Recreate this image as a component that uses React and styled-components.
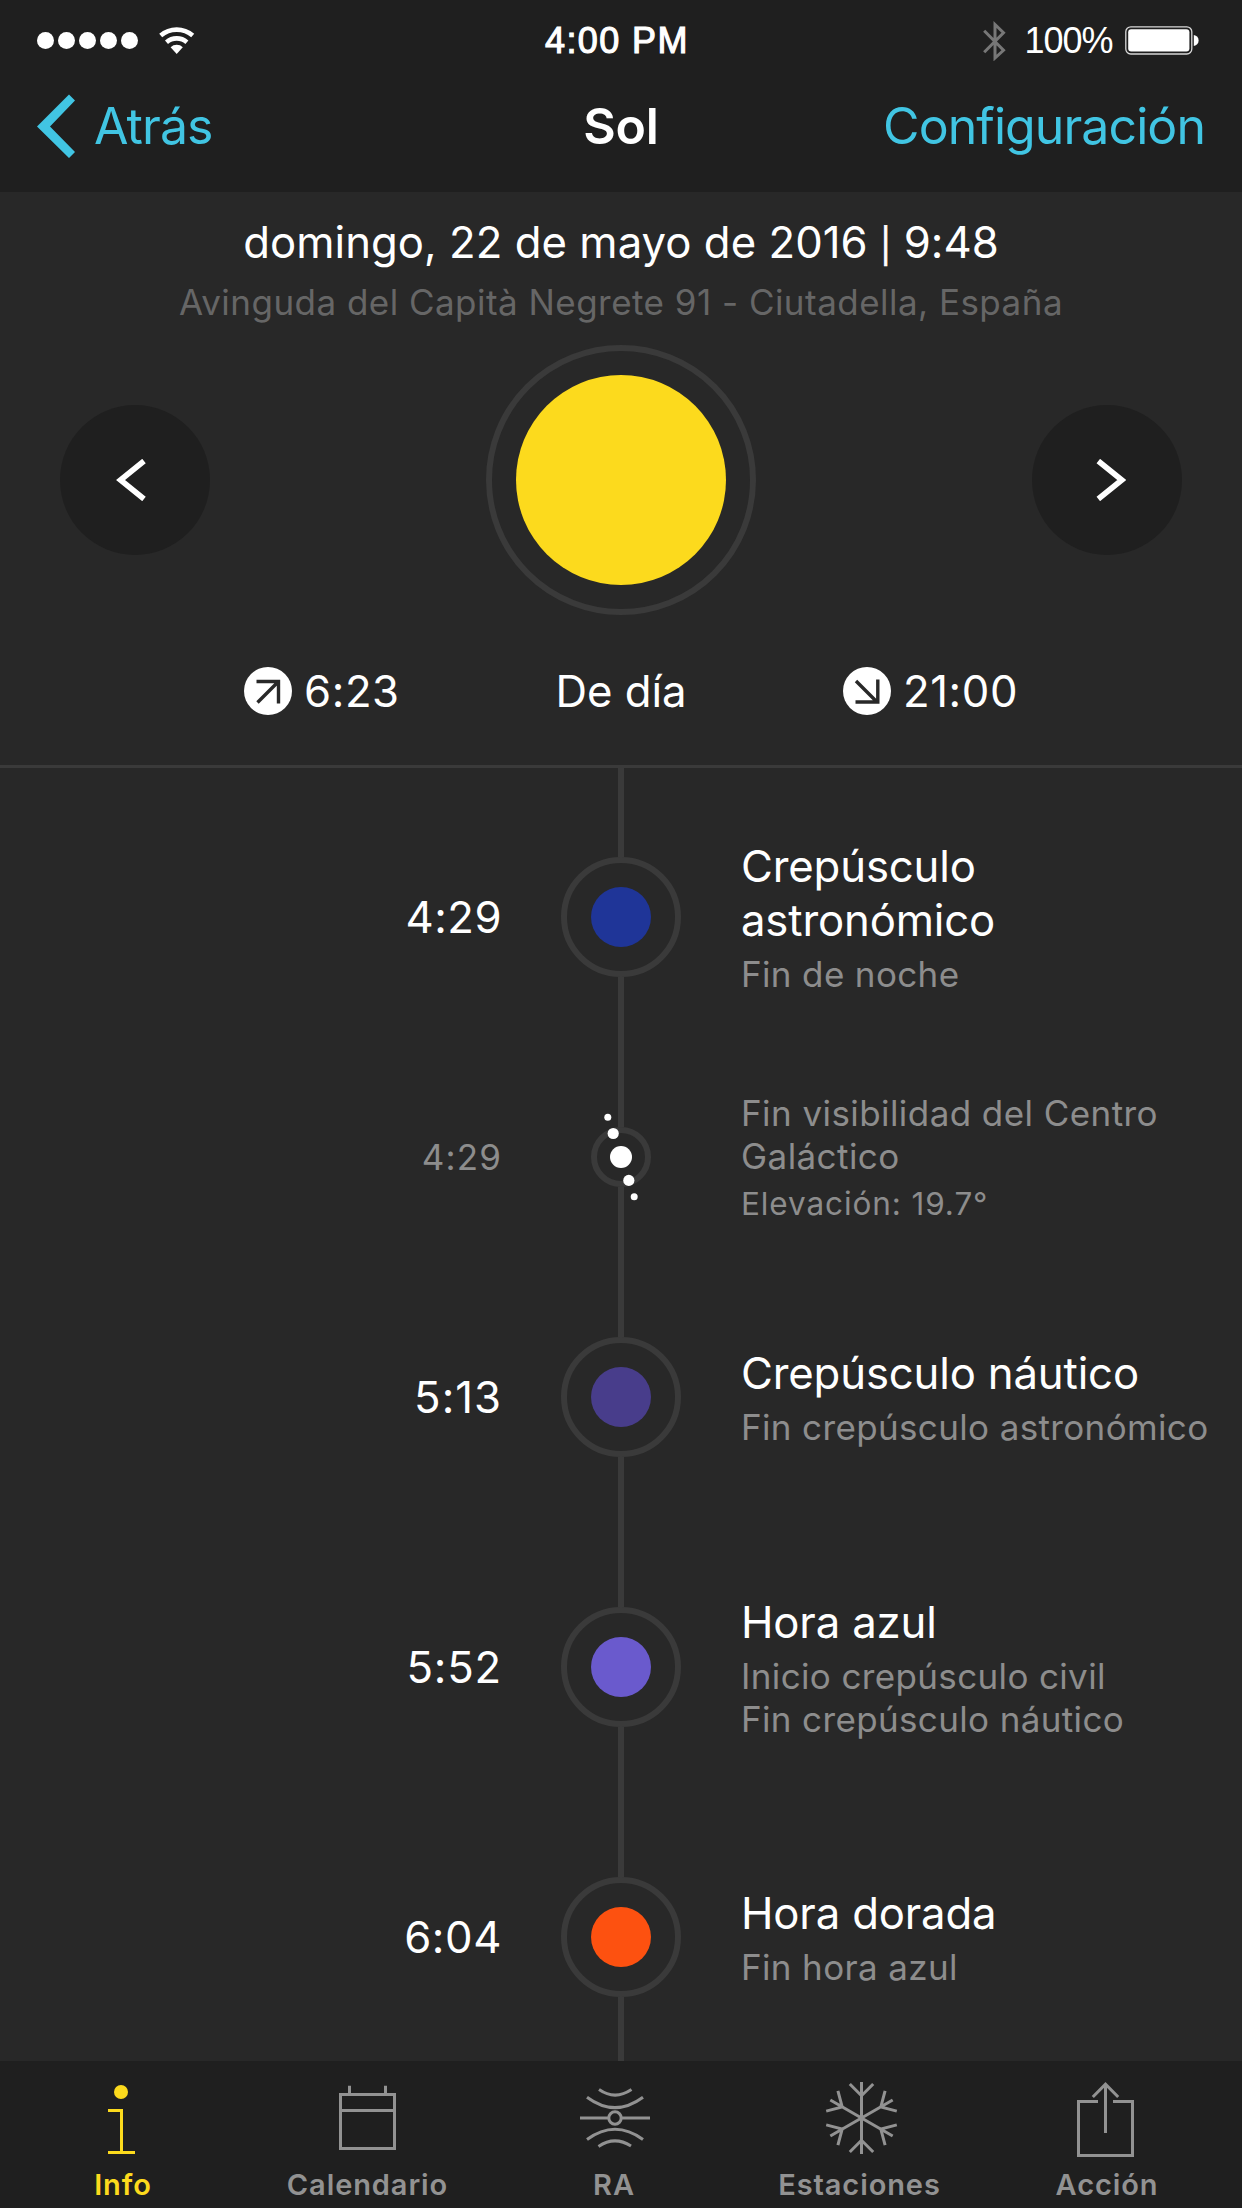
import React from 'react';
import styled, { createGlobalStyle } from 'styled-components';

const color = {
  bar: '#1f1f1f',
  page: '#282828',
  line: '#3a3a3a',
  accent: '#41c5e3',
  sun: '#fcda1d',
  muted: '#8d8d8d',
  faint: '#666666',
  tab: '#929292',
};

const GlobalStyle = createGlobalStyle`
  * { box-sizing: border-box; }
  body {
    margin: 0;
    background: ${color.page};
    color: #fff;
    font-family: Inter, "Liberation Sans", sans-serif;
  }
  svg { display: block; flex: none; }
`;

const Screen = styled.div`
  display: flex;
  flex-direction: column;
  width: 1242px;
  height: 2208px;
  overflow: hidden;
  background: ${color.page};
`;

/* ---------- status bar ---------- */

const StatusBar = styled.div`
  flex: none;
  display: grid;
  grid-template-columns: 508px 1fr auto;
  align-items: center;
  height: 81px;
  padding: 0 43.5px 0 37px;
  background: ${color.bar};
  font: 36px/40px "Liberation Sans", Arial, sans-serif;
  white-space: nowrap;
`;

const Signal = styled.div`
  display: flex;
  align-items: center;
  gap: 4px;
  margin-right: 21px;
`;

const SignalDot = styled.span`
  width: 17px;
  height: 17px;
  border-radius: 50%;
  background: #fff;
`;

const StatusGroup = styled.div`
  display: flex;
  align-items: center;
`;

const Clock = styled.span`
  letter-spacing: 1.4px;
  -webkit-text-stroke: 1.1px #fff;
`;

const BatteryLevel = styled.span`
  width: 100px;
  margin-left: 18px;
  letter-spacing: -1.05px;
`;

/* ---------- navigation bar ---------- */

const NavBar = styled.nav`
  flex: none;
  display: grid;
  grid-template-columns: 1fr auto 1fr;
  align-items: center;
  height: 111px;
  padding: 0 37px 21px 37px;
  background: ${color.bar};
  font-size: 50px;
  line-height: 60px;
`;

const NavLink = styled.a`
  display: flex;
  align-items: center;
  gap: 19px;
  justify-self: ${(p) => p.$side};
  color: ${color.accent};
  letter-spacing: -0.93px;
`;

const NavTitle = styled.h1`
  margin: 0;
  font-size: inherit;
  font-weight: 600;
  letter-spacing: -0.23px;
`;

/* ---------- summary ---------- */

const Summary = styled.section`
  flex: none;
  display: flex;
  flex-direction: column;
  height: 576px;
  padding-top: 24px;
  border-bottom: 3px solid ${color.line};
  text-align: center;
  white-space: nowrap;
`;

const DateLine = styled.div`
  font-size: 43.7px;
  line-height: 54px;
  letter-spacing: 0.04px;
`;

const Divider = styled.span`
  font-size: 34px;
  line-height: 0;
  -webkit-text-stroke: 0.6px #fff;
`;

const Address = styled.div`
  margin-top: 11px;
  color: ${color.faint};
  font-size: 35px;
  line-height: 43px;
  letter-spacing: 0.47px;
`;

const Carousel = styled.div`
  display: flex;
  align-items: center;
  justify-content: space-between;
  margin-top: 21px;
  padding: 0 60px;
`;

const RoundButton = styled.button`
  display: flex;
  align-items: center;
  justify-content: center;
  width: 150px;
  height: 150px;
  padding: 0 ${(p) => (p.$dir === 'prev' ? '8px 0 0' : '0 0 8px')};
  border: 0;
  border-radius: 50%;
  background: ${color.bar};
`;

const Ring = styled.div`
  position: relative;
  flex: none;
  display: flex;
  align-items: center;
  justify-content: center;
  width: ${(p) => p.$size}px;
  height: ${(p) => p.$size}px;
  border: 6px solid ${color.line};
  border-radius: 50%;
`;

const Disc = styled.div`
  width: ${(p) => p.$size}px;
  height: ${(p) => p.$size}px;
  border-radius: 50%;
  background: ${(p) => p.$fill};
`;

const RiseSet = styled.div`
  display: grid;
  grid-template-columns: 311px 132px 1fr;
  align-items: center;
  margin-top: 51px;
  padding-left: 244px;
  font-size: 43.7px;
  line-height: 48px;
`;

const SunTime = styled.div`
  display: flex;
  align-items: center;
  gap: 12px;
  padding-left: ${(p) => p.$indent || 0}px;
  letter-spacing: 0.6px;
`;

const Lowered = styled.span`
  padding-top: 2px;
`;

/* ---------- timeline ---------- */

const Timeline = styled.section`
  flex: none;
  display: flex;
  flex-direction: column;
  height: 1293px;
  overflow: hidden;
`;

const Track = styled.div`
  flex: ${(p) => (p.$height ? 'none' : '1')};
  align-self: center;
  width: 6px;
  height: ${(p) => (p.$height ? `${p.$height}px` : 'auto')};
  background: ${color.line};
`;

const EventRow = styled.article`
  flex: none;
  display: grid;
  grid-template-columns: 501px 120px 1fr;
  column-gap: 60px;
  align-items: center;
  height: ${(p) => (p.$small ? 210 : 270)}px;
  white-space: nowrap;
`;

const EventTime = styled.div`
  margin-right: -1px;
  text-align: right;
  font-size: ${(p) => (p.$small ? 35 : 43.7)}px;
  color: ${(p) => (p.$small ? color.muted : '#fff')};
  letter-spacing: ${(p) => p.$spacing}px;
`;

const Marker = styled.div`
  display: flex;
  flex-direction: column;
  align-items: center;
  height: 100%;
`;

const GalaxyDots = styled.svg`
  position: absolute;
  left: -6px;
  top: -26px;
`;

const EventText = styled.div`
  display: flex;
  flex-direction: column;
  padding-top: ${(p) => (p.$tall ? 3 : 1)}px;
`;

const EventTitle = styled.div`
  font-size: ${(p) => (p.$small ? 35 : 43.7)}px;
  line-height: ${(p) => (p.$small ? 43 : 54)}px;
  letter-spacing: ${(p) => (p.$small ? 0.43 : -0.16)}px;
  color: ${(p) => (p.$small ? color.muted : '#fff')};
`;

const EventNotes = styled.div`
  margin-top: ${(p) => (p.$small ? 6 : 5)}px;
  font-size: ${(p) => (p.$small ? 31.5 : 35)}px;
  line-height: ${(p) => (p.$small ? 39 : 43)}px;
  letter-spacing: ${(p) => (p.$small ? 0.9 : 0.36)}px;
  color: ${color.muted};
`;

/* ---------- tab bar ---------- */

const TabBar = styled.footer`
  flex: none;
  display: grid;
  grid-template-columns: repeat(5, 246px);
  height: 147px;
  padding-top: 18px;
  background: ${color.bar};
`;

const Tab = styled.div`
  display: flex;
  flex-direction: column;
  align-items: center;
  gap: 8px;
  color: ${(p) => (p.$active ? color.sun : color.tab)};
`;

const TabLabel = styled.span`
  padding-right: ${(p) => p.$trim || 0}px;
  font-size: 29px;
  font-weight: 600;
  line-height: 36px;
  letter-spacing: 0.9px;
`;

/* ---------- icons ---------- */

const WifiIcon = () => (
  <svg width="36" height="28" viewBox="0 0 36 28" fill="none" stroke="#fff" strokeWidth="4.6">
    <path d="M1.7 8.6A24.4 24.4 0 0 1 33.7 8.6" />
    <path d="M7.5 15.2A15.6 15.6 0 0 1 27.9 15.2" />
    <path d="M17.7 27L11.6 20.2A9 9 0 0 1 23.8 20.2Z" fill="#fff" stroke="none" />
  </svg>
);

const BluetoothIcon = () => (
  <svg width="24" height="40" viewBox="0 0 24 40" fill="none" stroke="#777" strokeWidth="3">
    <path d="M1.2 9.8L20.5 29.3L12 37V3.5L20.5 11.7L1.2 31.2" />
  </svg>
);

const BatteryIcon = () => (
  <svg width="74" height="29" viewBox="0 0 74 29">
    <rect x="0.8" y="0.8" width="66" height="27.2" rx="5" fill="none" stroke="#d8d8d8" strokeWidth="1.3" />
    <rect x="3.2" y="3.2" width="61.2" height="22.4" rx="3" fill="#fff" />
    <path d="M68.8 9C72 9.6 73.6 11.6 73.6 14.4S72 19.3 68.8 20Z" fill="#fff" />
  </svg>
);

const BackIcon = () => (
  <svg width="38" height="64" viewBox="0 0 38 64" fill={color.accent}>
    <path d="M32 0.5L38 6.5L13 32.5L38 58L32 64L0 32.5Z" />
  </svg>
);

const ChevronIcon = ({ flip }) => (
  <svg width="30" height="42" viewBox="0 0 30 42" fill="none" stroke="#fff" strokeWidth="5.6">
    <path d={flip ? 'M2.3 2L25.8 21L2.3 40' : 'M28 2L4.5 21L28 40'} />
  </svg>
);

const SunArrowIcon = ({ down }) => (
  <svg width="48" height="48" viewBox="0 0 48 48" fill="none" stroke={color.page} strokeWidth="3.4">
    <circle cx="24" cy="24" r="24" fill="#fff" stroke="none" />
    {down ? (
      <path d="M13 14L34 35M12.5 35H34.8V12.5" />
    ) : (
      <path d="M13.5 35.5L34.5 14.5M12.5 14.5H34.5V36.5" />
    )}
  </svg>
);

const TabIcon = ({ children }) => (
  <svg width="80" height="80" viewBox="0 0 80 80" fill="none" stroke="currentColor" strokeWidth="3">
    {children}
  </svg>
);

const InfoIcon = () => (
  <TabIcon>
    <circle cx="38" cy="13" r="7" fill="currentColor" stroke="none" />
    <path d="M25 31.5H38.5V73.5M25 73.5H52" />
  </TabIcon>
);

const CalendarIcon = () => (
  <TabIcon>
    <rect x="11.5" y="15.5" width="54" height="54" />
    <path d="M11.5 31.5H65.5M20.5 6.7V15M56.5 6.7V15" />
  </TabIcon>
);

const ArIcon = () => (
  <TabIcon>
    <g transform="translate(-5 -9)">
      <circle cx="45" cy="48" r="6.2" />
      <path d="M10 48H39M51 48H80" />
      <path d="M17 27.3Q45 48 73 27.3M29 19.6Q45 30.6 61.5 19.6" />
      <path d="M17 69.5Q45 49 73 69.5M28.5 76.5Q44.5 65.5 61 76" />
    </g>
  </TabIcon>
);

const SnowflakeIcon = () => (
  <TabIcon>
    {[0, 60, 120, 180, 240, 300].map((angle) => (
      <path
        key={angle}
        transform={`translate(40.5 39) rotate(${angle})`}
        d="M0 0V-36M-11.7 -34L0 -22.3L11.7 -34"
      />
    ))}
  </TabIcon>
);

const ShareIcon = () => (
  <TabIcon>
    <path d="M31 22.5H11.5V76.5H65.5V22.5H46M38.5 54V5.5M25.8 18L38.5 5.2L51.2 18" />
  </TabIcon>
);

/* ---------- data ---------- */

const events = [
  { time: '4:29', spacing: 0.5, fill: '#1f3598', title: ['Crepúsculo', 'astronómico'], notes: ['Fin de noche'] },
  { time: '4:29', spacing: 1.1, small: true, title: ['Fin visibilidad del Centro', 'Galáctico'], notes: ['Elevación: 19.7°'] },
  { time: '5:13', spacing: 1, fill: '#483d8b', title: ['Crepúsculo náutico'], notes: ['Fin crepúsculo astronómico'] },
  { time: '5:52', spacing: 0.8, fill: '#6a5acd', title: ['Hora azul'], notes: ['Inicio crepúsculo civil', 'Fin crepúsculo náutico'] },
  { time: '6:04', spacing: 0.6, fill: '#fd5110', title: ['Hora dorada'], notes: ['Fin hora azul'] },
];

const tabs = [
  { label: 'Info', Icon: InfoIcon, active: true },
  { label: 'Calendario', Icon: CalendarIcon, trim: 3 },
  { label: 'RA', Icon: ArIcon, trim: 2 },
  { label: 'Estaciones', Icon: SnowflakeIcon, trim: 3 },
  { label: 'Acción', Icon: ShareIcon },
];

const TimelineEvent = ({ time, spacing, fill, small, title, notes }) => (
  <EventRow $small={small}>
    <EventTime $small={small} $spacing={spacing}>{time}</EventTime>
    <Marker>
      <Track />
      <Ring $size={small ? 60 : 120}>
        {small ? (
          <GalaxyDots width="60" height="100" viewBox="-30 -50 60 100" fill="#fff">
            <circle r="11" />
            <circle cx="-7.8" cy="-23.5" r="5.6" />
            <circle cx="-13.2" cy="-39.7" r="3.5" />
            <circle cx="7.8" cy="23.4" r="5.6" />
            <circle cx="13.2" cy="39.7" r="3.5" />
          </GalaxyDots>
        ) : (
          <Disc $size={60} $fill={fill} />
        )}
      </Ring>
      <Track />
    </Marker>
    <EventText $tall={notes.length > 1}>
      {title.map((line) => <EventTitle key={line} $small={small}>{line}</EventTitle>)}
      <EventNotes $small={small}>
        {notes.map((line) => <div key={line}>{line}</div>)}
      </EventNotes>
    </EventText>
  </EventRow>
);

export default function App() {
  return (
    <Screen>
      <GlobalStyle />
      <StatusBar>
        <StatusGroup>
          <Signal>
            {[0, 1, 2, 3, 4].map((n) => <SignalDot key={n} />)}
          </Signal>
          <WifiIcon />
        </StatusGroup>
        <Clock>4:00 PM</Clock>
        <StatusGroup>
          <BluetoothIcon />
          <BatteryLevel>100%</BatteryLevel>
          <BatteryIcon />
        </StatusGroup>
      </StatusBar>

      <NavBar>
        <NavLink $side="start"><BackIcon />Atrás</NavLink>
        <NavTitle>Sol</NavTitle>
        <NavLink $side="end">Configuración</NavLink>
      </NavBar>

      <Summary>
        <DateLine>domingo, 22 de mayo de 2016 <Divider>|</Divider> 9:48</DateLine>
        <Address>Avinguda del Capità Negrete 91 - Ciutadella, España</Address>
        <Carousel>
          <RoundButton $dir="prev" aria-label="Anterior"><ChevronIcon /></RoundButton>
          <Ring $size={270}><Disc $size={210} $fill={color.sun} /></Ring>
          <RoundButton $dir="next" aria-label="Siguiente"><ChevronIcon flip /></RoundButton>
        </Carousel>
        <RiseSet>
          <SunTime><SunArrowIcon /><Lowered>6:23</Lowered></SunTime>
          <Lowered>De día</Lowered>
          <SunTime $indent={156}><SunArrowIcon down /><Lowered>21:00</Lowered></SunTime>
        </RiseSet>
      </Summary>

      <Timeline>
        <Track $height={14} />
        {events.map((event) => <TimelineEvent key={event.title[0]} {...event} />)}
      </Timeline>

      <TabBar>
        {tabs.map(({ label, Icon, active, trim }) => (
          <Tab key={label} $active={active}>
            <Icon />
            <TabLabel $trim={trim}>{label}</TabLabel>
          </Tab>
        ))}
      </TabBar>
    </Screen>
  );
}
